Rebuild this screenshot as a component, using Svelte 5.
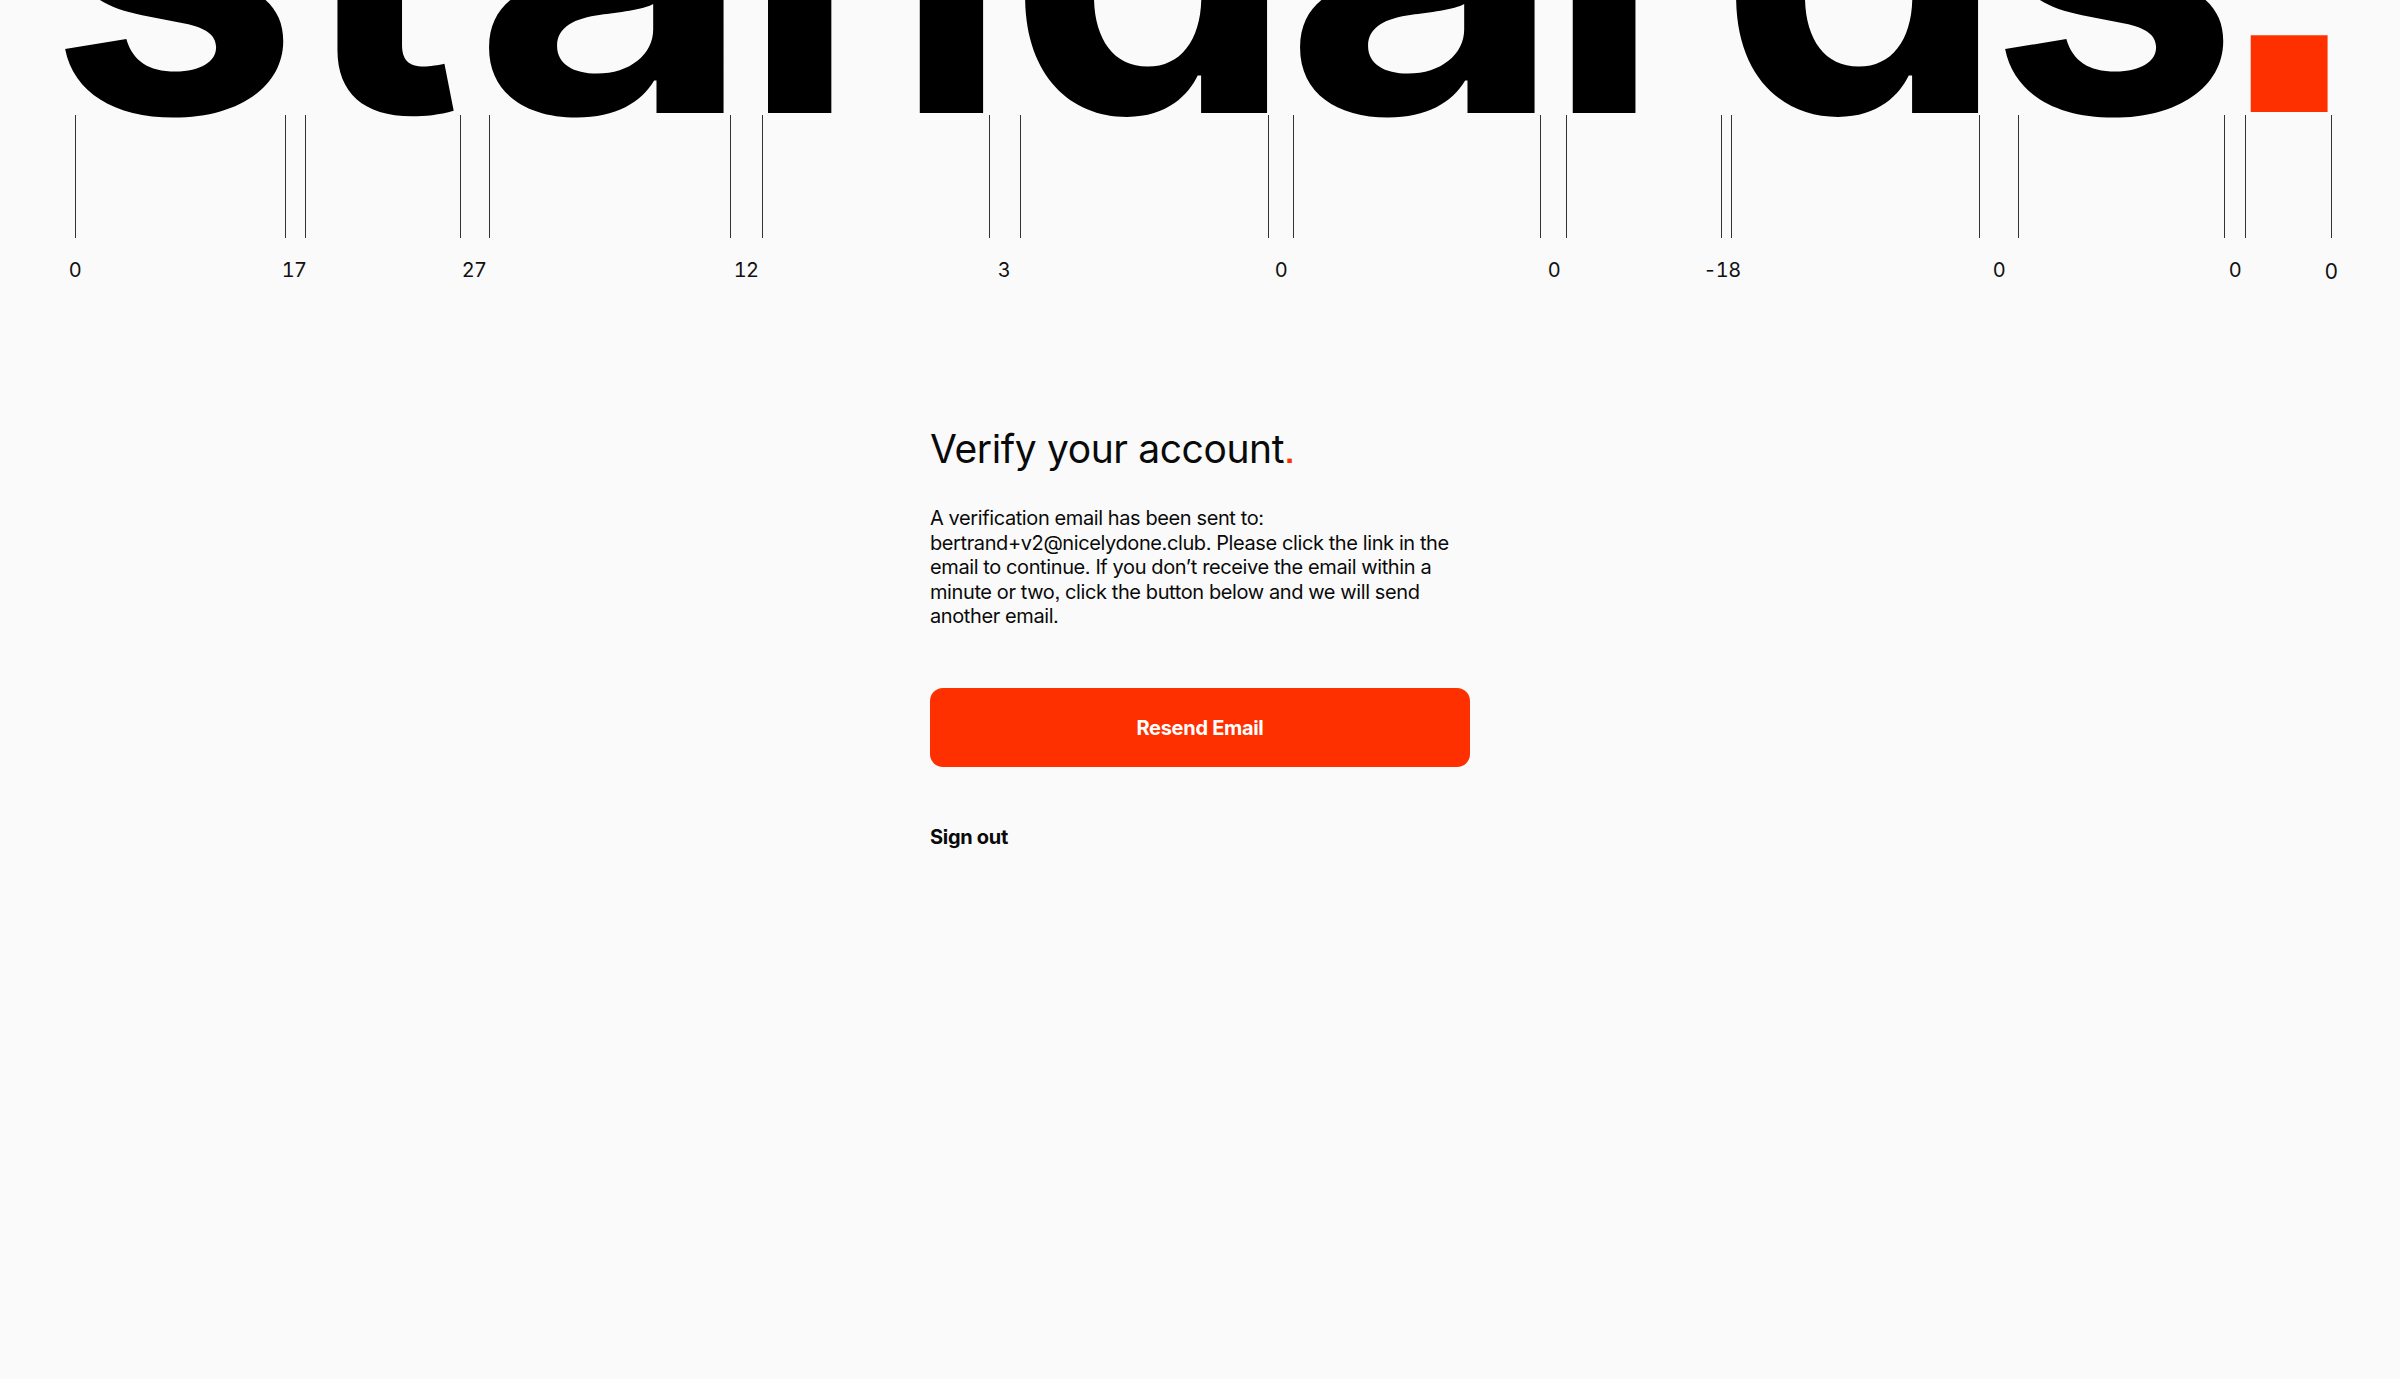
<script>
  // x = glyph origin on the canvas, sx = horizontal fit of the glyph
  const letters = [
    { ch: 's', x: 48, sx: 1.05 },
    { ch: 't', x: 300, sx: 1.03 },
    { ch: 'a', x: 473, sx: 1.13 },
    { ch: 'n', x: 741, sx: 1.01 },
    { ch: 'd', x: 1007, sx: 1.07 },
    { ch: 'a', x: 1284, sx: 1.13 },
    { ch: 'r', x: 1546, sx: 1 },
    { ch: 'd', x: 1718, sx: 1.07 },
    { ch: 's', x: 1988, sx: 1.05 },
    { ch: '.', x: 2209, sx: 0.96, accent: true }
  ]

  const ticks = [75, 285, 305, 460, 489, 730, 762, 989, 1020, 1268, 1293, 1540, 1566, 1721, 1731, 1979, 2018, 2224, 2245, 2331]

  const kerns = [
    { value: '0', x: 75 },
    { value: '17', x: 294 },
    { value: '27', x: 474 },
    { value: '12', x: 746 },
    { value: '3', x: 1004 },
    { value: '0', x: 1281 },
    { value: '0', x: 1554 },
    { value: '-18', x: 1722 },
    { value: '0', x: 1999 },
    { value: '0', x: 2235 },
    { value: '0', x: 2331, last: true }
  ]
</script>

<main class="page">
  <section class="specimen">
    <div class="word">
      {#each letters as l}
        <span class:accent={l.accent} style="left: {l.x}px; transform: scaleX({l.sx})">{l.ch}</span>
      {/each}
    </div>
    {#each ticks as x}
      <i class="tick" style="left: {x}px"></i>
    {/each}
    {#each kerns as k}
      <span class="kern" class:last={k.last} style="left: {k.x}px">{k.value}</span>
    {/each}
  </section>

  <section class="card">
    <h1>Verify your account<span class="accent">.</span></h1>
    <p>A verification email has been sent to: bertrand+v2@nicelydone.club. Please click the link in the email to continue. If you don’t receive the email within a minute or two, click the button below and we will send another email.</p>
    <button type="button">Resend Email</button>
    <a href="#signout">Sign out</a>
  </section>
</main>

<style>
  :global(body) { margin: 0; background: #fafafa; }

  .page { min-height: 1379px; color: #0a0a0a; font-family: Inter, "Noto Sans", sans-serif;
          font-feature-settings: "ss07"; }

  .specimen { position: relative; height: 282px; overflow: hidden; }
  .word { position: relative; height: 118px; overflow: hidden;
          font-size: 428px; font-weight: 700; line-height: 1; color: #000; }
  .word span { position: absolute; top: -257px; transform-origin: left center; }
  .word .accent { top: -319px; font-size: 500px; color: #ff3000; }

  .tick { position: absolute; top: 115px; width: 1px; height: 123px; background: #333; }
  .kern { position: absolute; top: 258px; transform: translateX(-50%);
          font: 20px Inter, sans-serif; font-feature-settings: "tnum"; letter-spacing: -0.6px;
          line-height: 24px; color: #111; }
  .kern.last { top: 260px; font-size: 21px; }

  .card { width: 540px; margin: 0 auto; padding-top: 142px; display: flex;
          flex-direction: column; align-items: flex-start; }
  h1 { margin: 0; font-size: 39px; font-weight: 400; line-height: 50px; letter-spacing: -0.4px; }
  h1 .accent { color: #ff3000; }
  p { margin: 32px 0 0; font-size: 20px; line-height: 24.5px; letter-spacing: -0.4px; }
  button { display: block; width: 100%; height: 79px; margin-top: 59px; padding: 2px 0 0; border: 0;
           border-radius: 13px; background: #ff3000; color: #fff;
           font: 700 20px Inter, sans-serif; letter-spacing: -0.3px; }
  a { margin-top: 57px; font-size: 20px; font-weight: 700; line-height: 26px;
      letter-spacing: -0.3px; color: #0a0a0a; text-decoration: none; }
</style>
